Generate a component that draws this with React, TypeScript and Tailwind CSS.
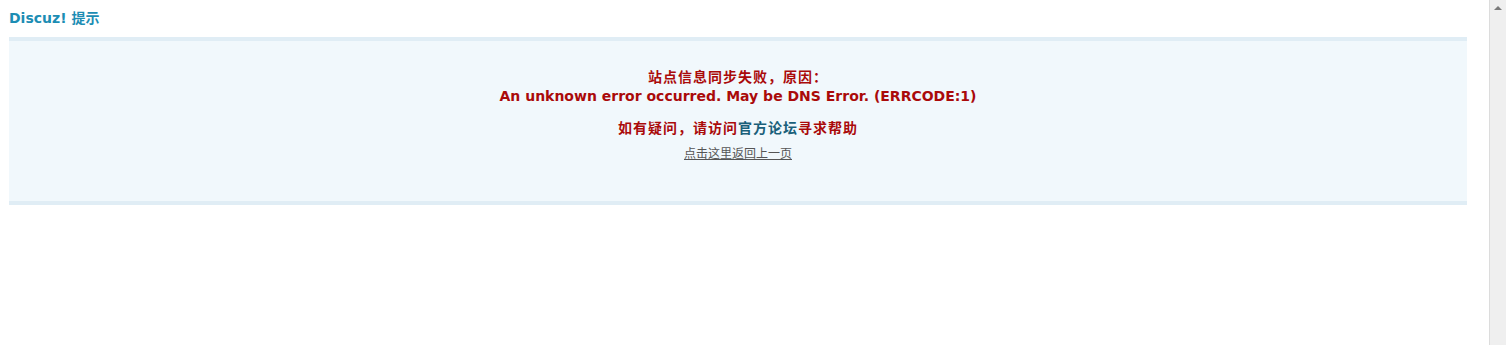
import React from "react";

export default function App() {
  return (
    <div className="flex h-[345px] w-full bg-white overflow-hidden">
      <div className="flex-1 pl-[9px] pr-[22px] font-['DejaVu_Sans','Noto_Sans_CJK_SC',sans-serif]">
        <h3 className="mt-[8px] h-[20px] text-[14px] leading-[20px] font-bold text-[#1c8db4]">
          Discuz! 提示
        </h3>
        <div className="mt-[9px] border-y-4 border-[#e0edf5] bg-[#f1f8fc] pt-[27px] pb-[38px] text-center">
          <div className="text-[14px] leading-[19px] font-bold text-[#aa0a0a]">
            <div className="tracking-[1px]">站点信息同步失败，原因：</div>
            <div>An unknown error occurred. May be DNS Error. (ERRCODE:1)</div>
          </div>
          <div className="mt-[13px] text-[14px] leading-[19px] font-bold tracking-[1px] text-[#aa0a0a]">
            如有疑问，请访问<span className="text-[#19607a]">官方论坛</span>寻求帮助
          </div>
          <div className="mt-[7px] text-[12px] leading-[18px] text-[#555]">
            <a className="underline cursor-pointer">点击这里返回上一页</a>
          </div>
        </div>
      </div>
      <div className="relative w-[17px] h-full bg-[#efefef] border-l border-[#dcdcdc]">
        <div className="flex justify-center pt-[6px]">
          <div className="w-0 h-0 border-l-[4px] border-r-[4px] border-b-[4px] border-l-transparent border-r-transparent border-b-[#7a7a7a]" />
        </div>
      </div>
    </div>
  );
}
